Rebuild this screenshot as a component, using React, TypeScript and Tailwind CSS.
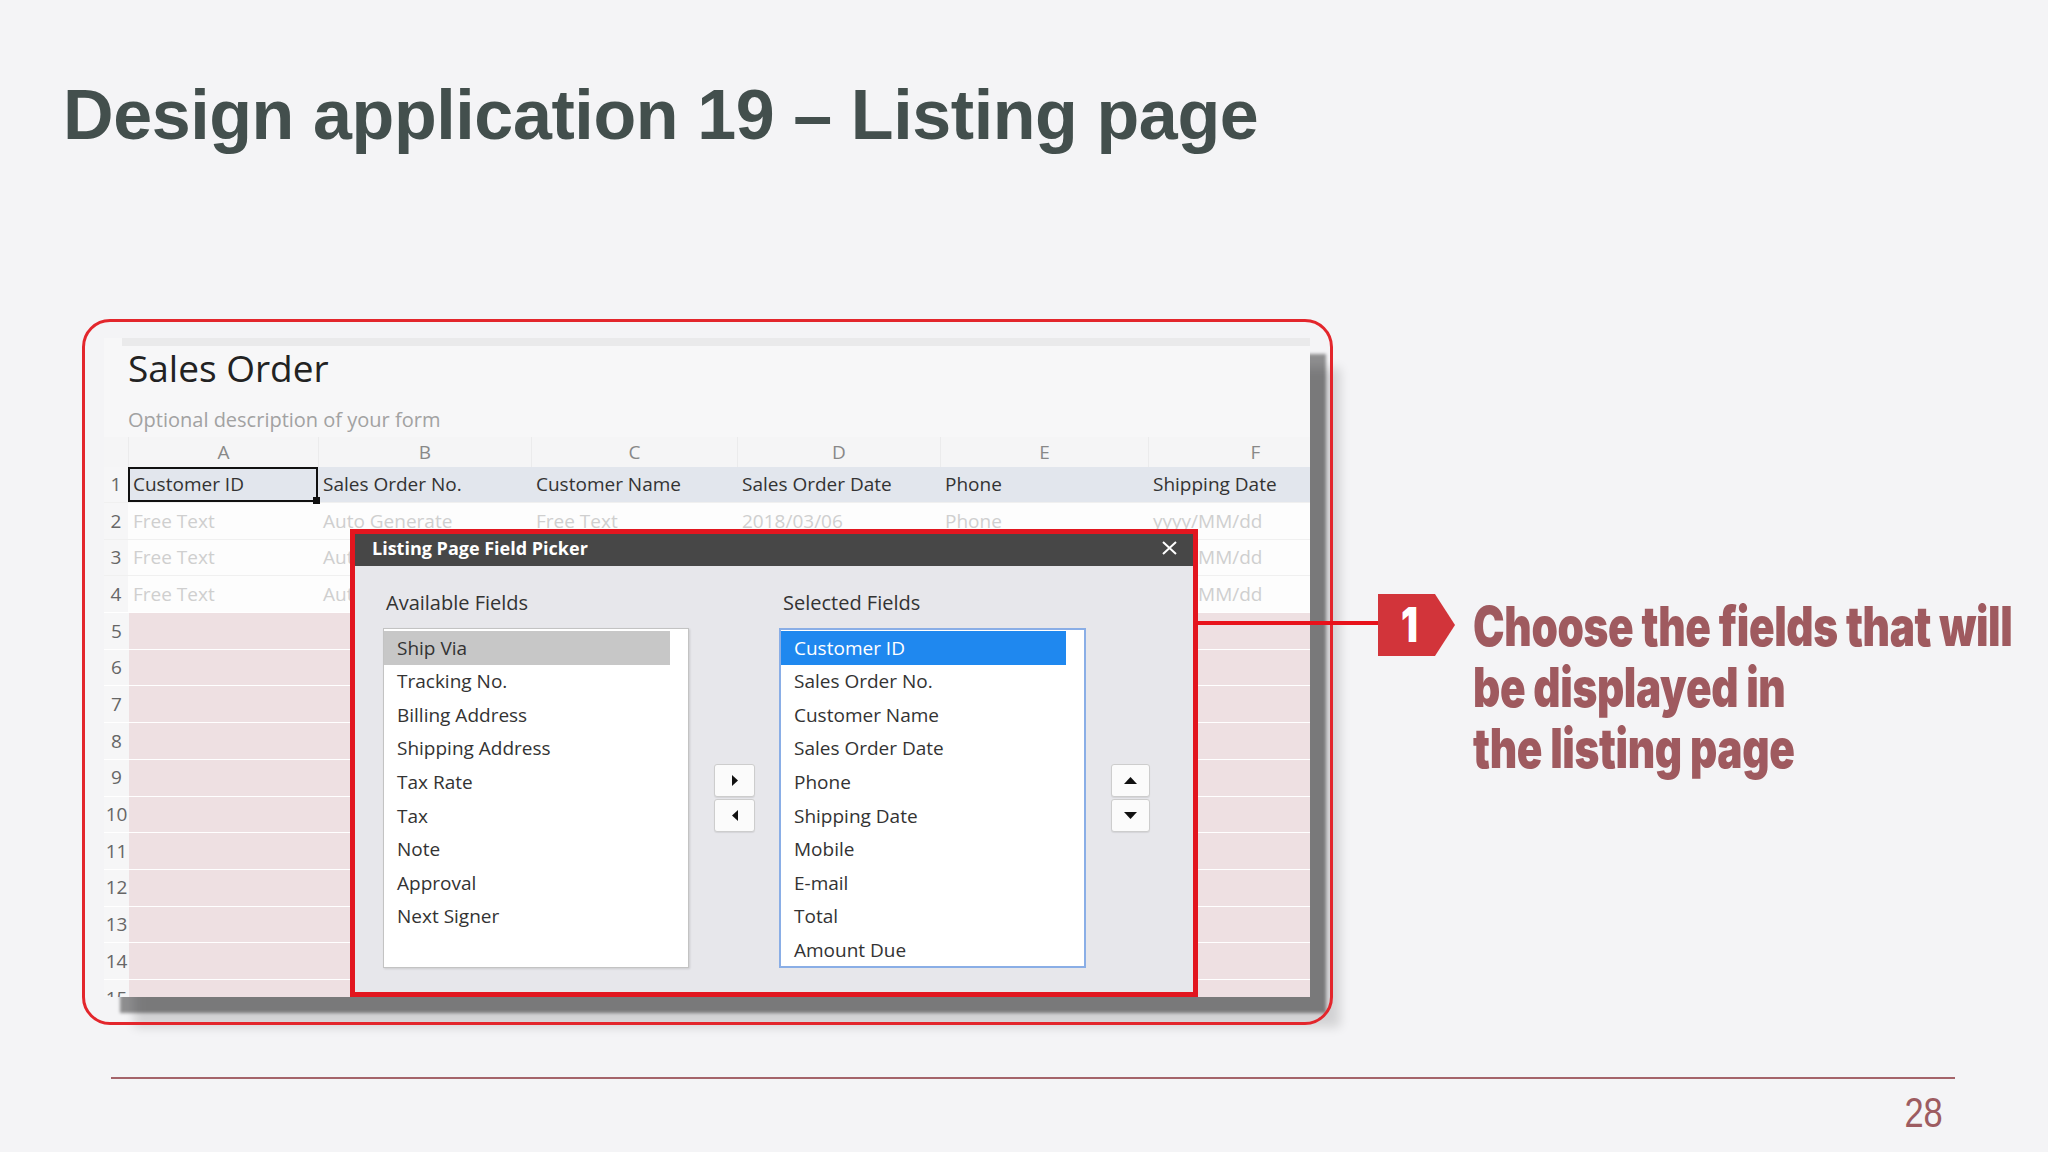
import React from 'react'

const columns = [
  { letter: 'A', width: 'w-[190px]', field: 'Customer ID', hint: 'Free Text' },
  { letter: 'B', width: 'w-[213px]', field: 'Sales Order No.', hint: 'Auto Generate' },
  { letter: 'C', width: 'w-[206px]', field: 'Customer Name', hint: 'Free Text' },
  { letter: 'D', width: 'w-[203px]', field: 'Sales Order Date', hint: '2018/03/06' },
  { letter: 'E', width: 'w-[208px]', field: 'Phone', hint: 'Phone' },
  { letter: 'F', width: 'w-[214px]', field: 'Shipping Date', hint: 'yyyy/MM/dd' },
]

const available = ['Ship Via', 'Tracking No.', 'Billing Address', 'Shipping Address', 'Tax Rate', 'Tax', 'Note', 'Approval', 'Next Signer']
const selected = ['Customer ID', 'Sales Order No.', 'Customer Name', 'Sales Order Date', 'Phone', 'Shipping Date', 'Mobile', 'E-mail', 'Total', 'Amount Due']

const Triangle = ({ dir }: { dir: 'left' | 'right' | 'up' | 'down' }) => {
  if (dir === 'right') return <svg width="6" height="11" viewBox="0 0 6 11"><polygon points="0,0 6,5.5 0,11" fill="#111" /></svg>
  if (dir === 'left') return <svg width="6" height="11" viewBox="0 0 6 11"><polygon points="6,0 0,5.5 6,11" fill="#111" /></svg>
  if (dir === 'up') return <svg width="13" height="7" viewBox="0 0 13 7"><polygon points="0,7 6.5,0 13,7" fill="#111" /></svg>
  return <svg width="13" height="7" viewBox="0 0 13 7"><polygon points="0,0 6.5,7 13,0" fill="#111" /></svg>
}

const ArrowButton = ({ dir, wide }: { dir: 'left' | 'right' | 'up' | 'down'; wide?: boolean }) => (
  <div
    className={`flex h-[33px] items-center justify-center rounded-[3px] border border-[#cdcdcd] bg-[#fbfbfb] shadow-[0_1px_1px_rgba(0,0,0,0.08)] ${wide ? 'w-[41px]' : 'w-[39px]'}`}
  >
    <Triangle dir={dir} />
  </div>
)

const ListBox = ({ items, focus }: { items: string[]; focus?: boolean }) => (
  <div
    className={`mt-[15px] h-[340px] overflow-hidden bg-white ${
      focus ? 'w-[307px] border-2 border-[#8aaee6] pt-[1px]' : 'w-[306px] border border-[#c3c3c3] pt-[2px] shadow-[1px_1px_2px_rgba(0,0,0,0.12)]'
    }`}
  >
    {items.map((item, i) => (
      <div
        key={item}
        className={`mr-[18px] flex h-[33.6px] items-center pl-[13px] text-[19px] ${
          i === 0 ? (focus ? 'bg-[#1f88ef] text-white' : 'bg-[#c7c7c7] text-[#333]') : 'text-[#333]'
        }`}
      >
        {item}
      </div>
    ))}
  </div>
)

const FieldPicker = () => (
  <div className="absolute left-[246px] top-[191px] z-10 flex h-[468px] w-[848px] flex-col border-[5px] border-[#e2161f]">
    <div className="flex h-[32px] shrink-0 items-center justify-between bg-[#474747] pb-[5px] pl-[17px] pr-[16px]">
      <span className="text-[18px] font-bold leading-none text-white">Listing Page Field Picker</span>
      <svg width="15" height="14" viewBox="0 0 15 14">
        <path d="M1 1 L14 13 M14 1 L1 13" stroke="#fff" strokeWidth="2" />
      </svg>
    </div>
    <div className="flex flex-1 items-start bg-[#e7e7eb] pl-[28px] pt-[27px]">
      <div>
        <p className="pl-[3px] text-[20px] leading-none text-[#333]">Available Fields</p>
        <ListBox items={available} />
      </div>
      <div className="ml-[25px] mt-[171px] flex flex-col gap-[2px]">
        <ArrowButton dir="right" wide />
        <ArrowButton dir="left" wide />
      </div>
      <div className="ml-[24px]">
        <p className="pl-[4px] text-[20px] leading-none text-[#333]">Selected Fields</p>
        <ListBox items={selected} focus />
      </div>
      <div className="ml-[25px] mt-[171px] flex flex-col gap-[2px]">
        <ArrowButton dir="up" />
        <ArrowButton dir="down" />
      </div>
    </div>
  </div>
)

const SalesOrderSheet = () => (
  <div className="relative h-[659px] w-[1206px] overflow-hidden bg-[#f7f7f8] font-['Open_Sans',sans-serif] shadow-[16px_16px_3px_rgba(0,0,0,0.42),30px_30px_10px_rgba(0,0,0,0.14)]">
    <div className="ml-[18px] h-[8px] bg-[#eaeaeb]" />
    <div className="pl-[24px] pt-[3px]">
      <p className="text-[37px] leading-none text-[#222]">Sales Order</p>
      <p className="mt-[24px] text-[20px] leading-none text-[#a2a2a2]">Optional description of your form</p>
    </div>

    <div className="mt-[7px]">
      {/* column letters */}
      <div className="flex h-[30px] bg-[#f5f5f6]">
        <div className="w-[24px] shrink-0" />
        {columns.map((c) => (
          <div key={c.letter} className={`${c.width} flex shrink-0 items-center justify-center border-l border-[#ebebec] text-[19px] text-[#888]`}>
            {c.letter}
          </div>
        ))}
      </div>

      {/* field names */}
      <div className="flex h-[35px] bg-[#e2e6ed]">
        <div className="flex w-[24px] shrink-0 items-center justify-center bg-[#f6f6f7] text-[19px] text-[#666]">1</div>
        {columns.map((c, i) => (
          <div
            key={c.letter}
            className={`${c.width} relative flex shrink-0 items-center text-[19px] text-[#333] ${i === 0 ? 'border-2 border-[#111] pl-[3px]' : 'pl-[5px]'}`}
          >
            {c.field}
            {i === 0 && <span className="absolute -bottom-[4px] -right-[4px] h-[7px] w-[7px] bg-[#111]" />}
          </div>
        ))}
      </div>

      {/* sample rows */}
      {[2, 3, 4].map((n) => (
        <div key={n} className="flex h-[36.7px] border-t border-[#f0f0f0] bg-[#fdfdfd]">
          <div className="flex w-[24px] shrink-0 items-center justify-center bg-[#f6f6f7] text-[19px] text-[#666]">{n}</div>
          {columns.map((c) => (
            <div key={c.letter} className={`${c.width} flex shrink-0 items-center pl-[5px] text-[19px] text-[#cfcfcf]`}>
              {c.hint}
            </div>
          ))}
        </div>
      ))}

      {/* empty rows */}
      {[5, 6, 7, 8, 9, 10, 11, 12, 13, 14, 15].map((n) => (
        <div key={n} className="flex h-[36.7px] border-t border-white">
          <div className="flex w-[25px] shrink-0 items-center justify-center bg-[#f6f6f7] text-[19px] text-[#666]">{n}</div>
          <div className="flex-1 bg-[#eee0e2]" />
        </div>
      ))}
    </div>

    <FieldPicker />
  </div>
)

const Callout = () => (
  <div className="relative z-30 ml-[45px] mt-[275px] flex items-start">
    <div className="absolute right-full top-[27px] h-[4px] w-[182px] bg-[#e8121b]" />
    <div className="flex h-[62px] w-[77px] shrink-0 items-center bg-[#d2343a] pl-[23px] [clip-path:polygon(0_0,74%_0,100%_50%,74%_100%,0_100%)]">
      <span className="inline-block origin-left scale-x-[0.78] font-['Inter',sans-serif] text-[48px] font-black leading-none text-white">1</span>
    </div>
    <p className="ml-[18px] mt-[2px] origin-top-left scale-x-[0.77] whitespace-nowrap font-['Inter',sans-serif] text-[55px] font-black leading-[61px] tracking-[-0.5px] text-[#9f5a5f]">
      Choose the fields that will
      <br />
      be displayed in
      <br />
      the listing page
    </p>
  </div>
)

export default function App() {
  return (
    <div className="relative h-[1152px] w-[2048px] overflow-hidden bg-[#f4f4f6]">
      <h1 className="pl-[63px] pt-[80px] font-['Liberation_Sans',Arial,sans-serif] text-[70px] font-bold leading-none tracking-[-0.4px] text-[#434f4d]">
        Design application 19 – Listing page
      </h1>

      <div className="mt-[169px] flex items-start">
        <div className="relative ml-[82px] h-[706px] w-[1251px] shrink-0">
          <div className="pl-[22px] pt-[19px]">
            <SalesOrderSheet />
          </div>
          <div className="pointer-events-none absolute inset-0 z-20 rounded-[28px] border-[3px] border-[#e3262c]" />
        </div>
        <Callout />
      </div>

      <div className="ml-[111px] mt-[52px] h-[2px] w-[1844px] bg-[#a4646a]" />
      <div className="mt-[13px] flex justify-end pr-[105px]">
        <span className="inline-block origin-right scale-x-[0.82] font-['Liberation_Sans',Arial,sans-serif] text-[42px] leading-none text-[#9d5c61]">28</span>
      </div>
    </div>
  )
}
